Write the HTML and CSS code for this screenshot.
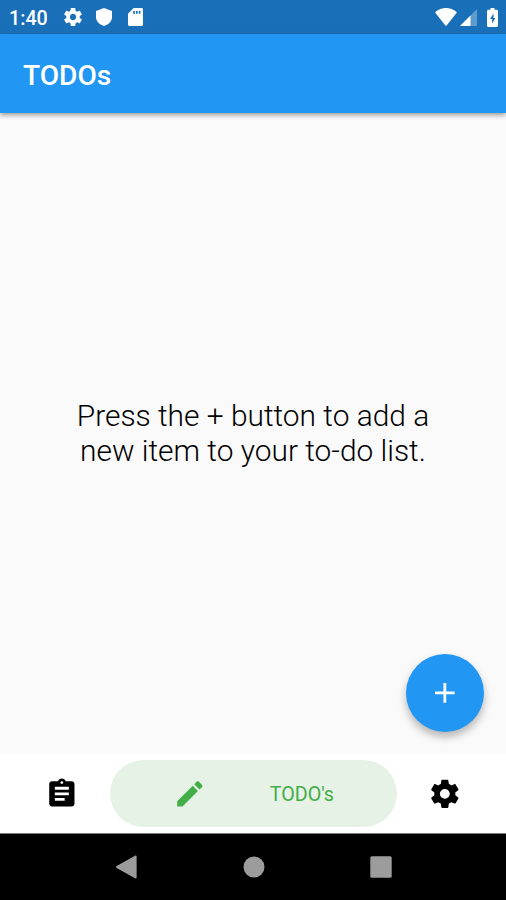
FILE: index.html
```
<!DOCTYPE html>
<html lang="en">
<head>
    <meta charset="UTF-8">
    <meta name="viewport" content="width=device-width, initial-scale=1.0">
    <title>TODOs</title>
    <link rel="stylesheet" href="styles.css">
</head>
<body>
    <div class="status-bar">
        <span class="clock">1:40</span>
        <svg class="status-gear" viewBox="2 2 20 20"><path d="M19.43 12.98c.04-.32.07-.64.07-.98s-.03-.66-.07-.98l2.11-1.65c.19-.15.24-.42.12-.64l-2-3.46c-.12-.22-.39-.3-.61-.22l-2.49 1c-.52-.4-1.08-.73-1.69-.98l-.38-2.65C14.46 2.18 14.25 2 14 2h-4c-.25 0-.46.18-.49.42l-.38 2.65c-.61.25-1.17.59-1.69.98l-2.49-1c-.23-.09-.49 0-.61.22l-2 3.46c-.13.22-.07.49.12.64l2.11 1.65c-.04.32-.07.65-.07.98s.03.66.07.98l-2.11 1.65c-.19.15-.24.42-.12.64l2 3.46c.12.22.39.3.61.22l2.49-1c.52.4 1.08.73 1.69.98l.38 2.65c.03.24.24.42.49.42h4c.25 0 .46-.18.49-.42l.38-2.65c.61-.25 1.17-.59 1.69-.98l2.49 1c.23.09.49 0 .61-.22l2-3.46c.12-.22.07-.49-.12-.64l-2.11-1.65zM12 15.5c-1.93 0-3.5-1.57-3.5-3.5s1.57-3.5 3.5-3.5 3.5 1.57 3.5 3.5-1.57 3.5-3.5 3.5z"/></svg>
        <svg class="status-shield" viewBox="0 0 16 18"><path d="M8 0l8 3v6c0 4-3 7.500-8 9-5-1.500-8-5-8-9V3z"/></svg>
        <svg class="status-card" viewBox="0 0 16 19"><path fill-rule="evenodd" d="M6 0h8.500C15.400 0 16 .7 16 1.600v15.800c0 .9-.7 1.600-1.600 1.600H1.600C.7 19 0 18.300 0 17.400V6zM5.500 3v3h1.800V3zm3 0v3h1.800V3zm3 0v3h1.800V3z"/></svg>
        <span class="spacer"></span>
        <svg class="status-wifi" viewBox="0 0 22 18"><path d="M11.600 17.500c-.3.4-.9.400-1.200 0L.5 5C.2 4.600.2 4.100.6 3.800 3.500 1.400 7 0 11 0s7.500 1.400 10.400 3.800c.4.3.4.8.1 1.200z"/></svg>
        <svg class="status-signal" viewBox="0 0 17 17"><path opacity=".3" d="M0 17L17 0v17z"/><path d="M0 17L10.500 6.500V17z"/></svg>
        <svg class="status-battery" viewBox="0 0 11 19"><path fill-rule="evenodd" d="M3.500 0h4v1.800h2c.9 0 1.500.6 1.500 1.500v14.200c0 .9-.6 1.500-1.500 1.500h-8C.6 19 0 18.400 0 17.500V3.300c0-.9.6-1.500 1.500-1.500h2zM6.500 5.500L3 11h2.200v4.500L8.300 10H6.500z"/></svg>
    </div>
    <header class="app-bar">
        <h1 class="app-title">TODOs</h1>
    </header>
    <main class="content">
        <p class="empty-text">Press the + button to add a<br>new item to your to-do list.</p>
        <button class="fab" aria-label="Add">
            <svg class="icon" viewBox="0 0 24 24"><path d="M19 13h-6v6h-2v-6H5v-2h6V5h2v6h6v2z"/></svg>
        </button>
    </main>
    <nav class="tabs">
        <a class="tab">
            <svg class="icon" viewBox="0 0 24 24"><path d="M19 3h-4.180C14.400 1.840 13.300 1 12 1c-1.300 0-2.400.84-2.820 2H5c-1.100 0-2 .9-2 2v14c0 1.100.9 2 2 2h14c1.100 0 2-.9 2-2V5c0-1.100-.9-2-2-2zm-7 0c.55 0 1 .45 1 1s-.45 1-1 1-1-.45-1-1 .45-1 1-1zm2 14H7v-2h7v2zm3-4H7v-2h10v2zm0-4H7V7h10v2z"/></svg>
        </a>
        <a class="tab tab-active">
            <svg class="icon" viewBox="0 0 24 24"><path d="M3 17.250V21h3.750L17.810 9.940l-3.750-3.750L3 17.250zM20.710 7.040c.39-.39.39-1.020 0-1.410l-2.340-2.340c-.39-.39-1.020-.39-1.410 0l-1.830 1.830 3.750 3.750 1.830-1.830z"/></svg>
            <span class="tab-label">TODO's</span>
        </a>
        <a class="tab">
            <svg class="icon" viewBox="0 0 24 24"><path d="M19.43 12.98c.04-.32.07-.64.07-.98s-.03-.66-.07-.98l2.11-1.65c.19-.15.24-.42.12-.64l-2-3.46c-.12-.22-.39-.3-.61-.22l-2.49 1c-.52-.4-1.08-.73-1.69-.98l-.38-2.65C14.46 2.18 14.25 2 14 2h-4c-.25 0-.46.18-.49.42l-.38 2.65c-.61.25-1.17.59-1.69.98l-2.49-1c-.23-.09-.49 0-.61.22l-2 3.46c-.13.22-.07.49.12.64l2.11 1.65c-.04.32-.07.65-.07.98s.03.66.07.98l-2.11 1.65c-.19.15-.24.42-.12.64l2 3.46c.12.22.39.3.61.22l2.49-1c.52.4 1.08.73 1.69.98l.38 2.65c.03.24.24.42.49.42h4c.25 0 .46-.18.49-.42l.38-2.65c.61-.25 1.17-.59 1.69-.98l2.49 1c.23.09.49 0 .61-.22l2-3.46c.12-.22.07-.49-.12-.64l-2.11-1.65zM12 15.5c-1.93 0-3.5-1.57-3.5-3.5s1.57-3.5 3.5-3.5 3.5 1.57 3.5 3.5-1.57 3.5-3.5 3.5z"/></svg>
        </a>
    </nav>
    <div class="system-nav">
        <svg class="sys-icon" viewBox="0 0 24 24"><path d="M1.600 11L20 .7c.8-.4 1.600 0 1.600.9v20.800c0 .9-.8 1.300-1.600.9L1.600 13c-.8-.5-.8-1.500 0-2z"/></svg>
        <svg class="sys-icon" viewBox="0 0 24 24"><circle cx="12" cy="12" r="10.500"/></svg>
        <svg class="sys-icon" viewBox="0 0 24 24"><rect x="1.300" y="1.300" width="21.400" height="21.400" rx="1.500"/></svg>
    </div>
</body>
</html>
```
FILE: styles.css
```
* {
    box-sizing: border-box;
}
body {
    margin: 0;
    height: 900px;
    display: flex;
    flex-direction: column;
    overflow: hidden;
    background-color: #fafafa;
    font-family: Roboto, sans-serif;
}
svg {
    display: block;
    flex: none;
    fill: currentColor;
}
.icon {
    width: 33.7px;
    height: 33.7px;
}

.status-bar {
    height: 34px;
    flex: none;
    display: flex;
    align-items: center;
    padding: 0 8px 0 9px;
    background-color: #1a70b8;
    color: #fff;
}
.clock {
    width: 55px;
    font-size: 19.7px;
    font-weight: 500;
    line-height: 32px;
    padding-top: 3px;
}
.status-gear {
    width: 18px;
    height: 18px;
}
.status-shield {
    width: 16px;
    height: 18px;
    margin-left: 14px;
}
.status-card {
    width: 15px;
    height: 18px;
    margin-left: 16px;
}
.spacer {
    flex: 1;
}
.status-wifi {
    width: 22px;
    height: 18px;
}
.status-signal {
    width: 17px;
    height: 17px;
    margin-left: 3px;
}
.status-battery {
    width: 11px;
    height: 19px;
    margin-left: 10px;
}

.app-bar {
    height: 79px;
    flex: none;
    display: flex;
    align-items: center;
    padding-top: 3px;
    padding-left: 23px;
    background-color: #2196f3;
    color: #fff;
    box-shadow: 0 2px 5px rgba(0, 0, 0, 0.4);
}
.app-title {
    margin: 0;
    font-size: 28.1px;
    font-weight: 500;
}

.content {
    flex: 1;
    display: flex;
    align-items: center;
    justify-content: center;
    position: relative;
}
.empty-text {
    margin: 0;
    padding-bottom: 2px;
    text-align: center;
    font-size: 29.9px;
    font-weight: 300;
    line-height: 35px;
    color: #000;
}
/* floating add button */
.fab {
    position: absolute;
    right: 22px;
    bottom: 22px;
    width: 78.5px;
    height: 78.5px;
    padding: 0;
    display: flex;
    align-items: center;
    justify-content: center;
    border: none;
    border-radius: 50%;
    background-color: #2196f3;
    color: #fff;
    box-shadow: 0 5px 9px rgba(0, 0, 0, 0.28);
}

.tabs {
    height: 79px;
    flex: none;
    display: flex;
    align-items: center;
    justify-content: space-between;
    padding: 0 13px 0 14px;
    background-color: #fff;
}
.tab {
    width: 96px;
    height: 67px;
    display: flex;
    align-items: center;
    justify-content: center;
    color: #000;
}
.tab-active {
    width: 287px;
    justify-content: flex-start;
    padding-left: 63px;
    border-radius: 34px;
    background-color: #e5f2e5;
    color: #43ad48;
}
.tab-label {
    margin-left: 63px;
    padding-top: 1px;
    font-size: 19.7px;
}

.system-nav {
    height: 67px;
    flex: none;
    display: flex;
    align-items: center;
    justify-content: center;
    gap: 103px;
    padding-left: 1px;
    border-top: 1px solid #777;
    background-color: #000;
    color: #9c9c9c;
}
.sys-icon {
    width: 24px;
    height: 24px;
}
```
